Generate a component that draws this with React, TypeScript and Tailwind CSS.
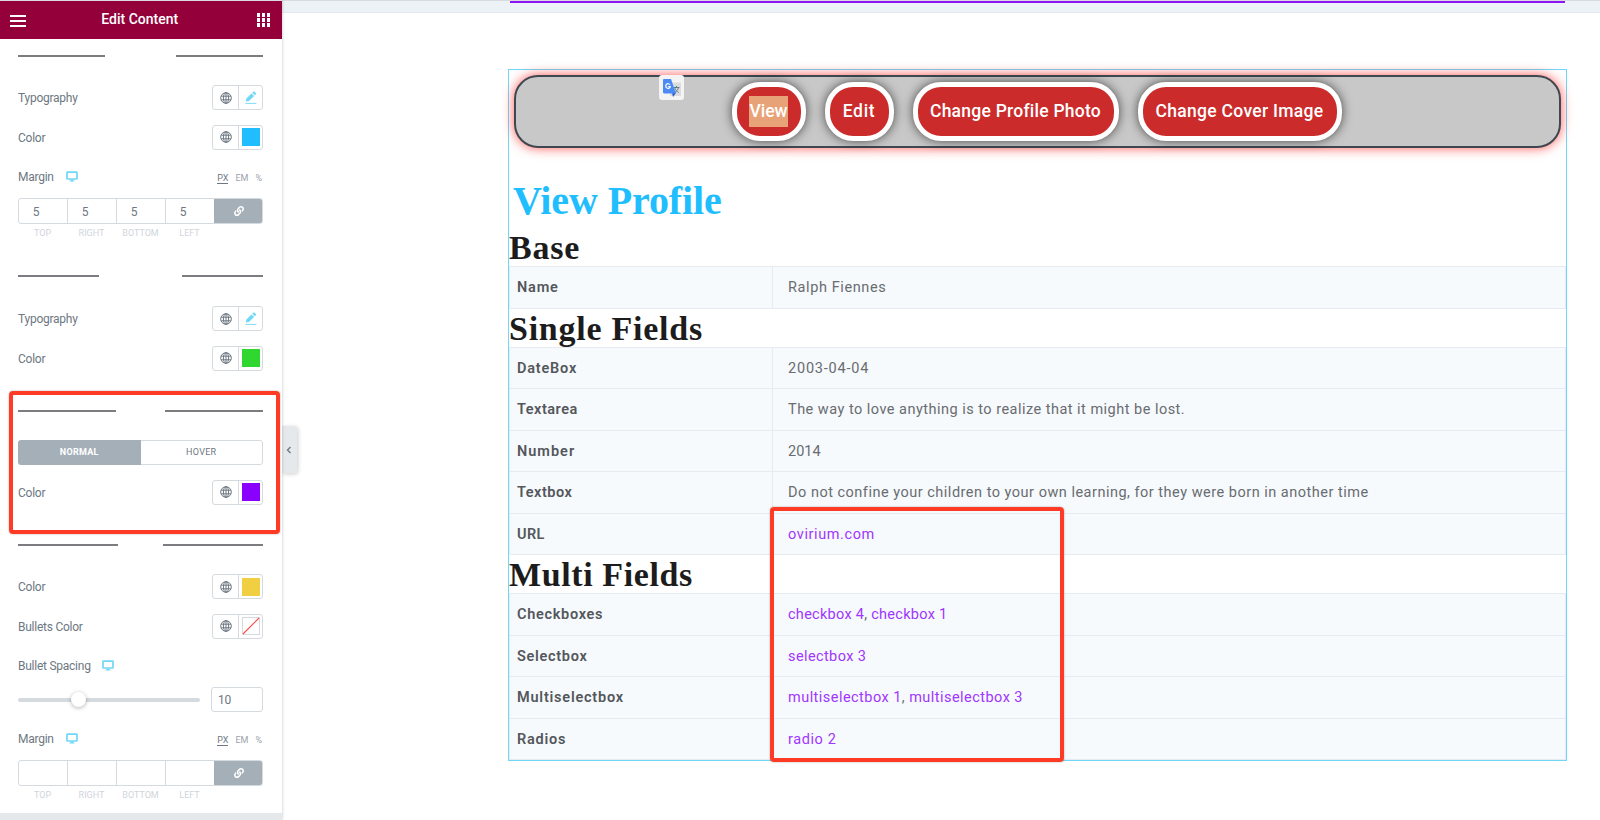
import { ReactNode } from 'react';
import { FaLink } from 'react-icons/fa';

type FieldRow = {
  label: string;
  labelTracking: string;
  value?: string;
  links?: string[];
  tracking: string;
};

const baseRows: FieldRow[] = [
  { label: 'Name', labelTracking: 'tracking-[0.8px]', value: 'Ralph Fiennes', tracking: 'tracking-[0.6px]' },
];

const singleRows: FieldRow[] = [
  { label: 'DateBox', labelTracking: 'tracking-[0.8px]', value: '2003-04-04', tracking: 'tracking-[0.8px]' },
  { label: 'Textarea', labelTracking: 'tracking-[0.5px]', value: 'The way to love anything is to realize that it might be lost.', tracking: 'tracking-[0.48px]' },
  { label: 'Number', labelTracking: 'tracking-[1px]', value: '2014', tracking: 'tracking-[0px]' },
  { label: 'Textbox', labelTracking: 'tracking-[0.5px]', value: 'Do not confine your children to your own learning, for they were born in another time', tracking: 'tracking-[0.5px]' },
  { label: 'URL', labelTracking: 'tracking-[0.4px]', links: ['ovirium.com'], tracking: 'tracking-[0.6px]' },
];

const multiRows: FieldRow[] = [
  { label: 'Checkboxes', labelTracking: 'tracking-[0.7px]', links: ['checkbox 4', 'checkbox 1'], tracking: 'tracking-[0.28px]' },
  { label: 'Selectbox', labelTracking: 'tracking-[0.7px]', links: ['selectbox 3'], tracking: 'tracking-[0.4px]' },
  { label: 'Multiselectbox', labelTracking: 'tracking-[0.78px]', links: ['multiselectbox 1', 'multiselectbox 3'], tracking: 'tracking-[0.46px]' },
  { label: 'Radios', labelTracking: 'tracking-[0.75px]', links: ['radio 2'], tracking: 'tracking-[0.6px]' },
];

const buttons = [
  { text: 'View', className: 'w-[74px] tracking-[0px]', selected: true },
  { text: 'Edit', className: 'w-[69px] tracking-[0.7px]' },
  { text: 'Change Profile Photo', className: 'w-[206px] tracking-[0.24px]' },
  { text: 'Change Cover Image', className: 'w-[204px] tracking-[0.3px]' },
];

const Monitor = ({ className }: { className: string }) => (
  <svg viewBox="0 0 12 11" className={`w-3 h-[11px] ${className}`} fill="none">
    <rect x="1" y="1.2" width="10" height="6.8" rx="0.5" stroke="#71d7f7" strokeWidth="1.7" />
    <path d="M4.4 8.5h3.2v1.2h1v.8H3.4v-.8h1z" fill="#71d7f7" />
  </svg>
);

const Globe = () => (
  <svg viewBox="0 0 12 12" className="size-3" fill="none" stroke="#6d7882" strokeWidth="1">
    <circle cx="6" cy="6" r="5.3" />
    <ellipse cx="6" cy="6" rx="2.6" ry="5.3" />
    <path d="M6 .7v10.6M1.2 4.2h9.6M1.2 7.8h9.6" />
  </svg>
);

const Pencil = () => (
  <svg viewBox="0 0 12 13" className="w-3 h-[13px]" fill="#71d7f7">
    <path d="M.8 10.600l.6-3.100 5.100-5.100 2.600 2.600-5.100 5.100zM7.200 1.700l1-1c.4-.4 1-.4 1.400 0l1.200 1.200c.4.4.4 1 0 1.400l-1 1z" />
    <path d="M.4 11.900h11v.9H.4z" />
  </svg>
);

const Control = ({ children }: { children: ReactNode }) => (
  <div className="flex w-[51px] h-[25px] border border-[#d5dadf] rounded-[3px]">
    <div className="w-[26px] flex items-center justify-center border-r border-[#d5dadf]">
      <Globe />
    </div>
    <div className="flex-1 flex items-center justify-center">{children}</div>
  </div>
);

const Row = ({ label, className, children }: { label: string; className: string; children: ReactNode }) => (
  <div className={`flex items-center justify-between h-[25px] ${className}`}>
    <span className="pt-px">{label}</span>
    <Control>{children}</Control>
  </div>
);

const Rule = ({ width, className }: { width: string; className: string }) => (
  <div className={`flex justify-between h-[2px] ${className}`}>
    <div className={`${width} bg-[#7b7b80]`} />
    <div className={`${width} bg-[#7b7b80]`} />
  </div>
);

const Dimensions = ({ values, className }: { values: string[]; className: string }) => (
  <div className={className}>
    <div className="flex items-center h-4">
      <span className="pt-px">Margin</span>
      <Monitor className="ml-3" />
      <div className="ml-auto mr-px mt-[4px] flex gap-[7px] text-[9px] leading-[10px] tracking-normal text-[#9aa3ab]">
        <span className="border-b border-[#6d7882] text-[#6d7882]">PX</span>
        <span>EM</span>
        <span>%</span>
      </div>
    </div>
    <div className="mt-[14px] flex h-[26px] border border-[#d5dadf] rounded-[3px] overflow-hidden">
      {values.map((v, i) => (
        <div key={i} className="w-[49px] pr-[14px] pt-px flex items-center justify-center border-r border-[#d5dadf]">
          {v}
        </div>
      ))}
      <div className="flex-1 -m-px flex items-center justify-center bg-[#a4afb7] text-white">
        <FaLink className="size-[10px]" />
      </div>
    </div>
    <div className="mt-[4px] flex text-[9px] leading-[10px] tracking-normal text-[#d0d5da] text-center">
      <span className="w-[49px]">TOP</span>
      <span className="w-[49px]">RIGHT</span>
      <span className="w-[49px]">BOTTOM</span>
      <span className="w-[49px]">LEFT</span>
    </div>
  </div>
);

const Section = ({ title, rows, tracking }: { title: string; rows: FieldRow[]; tracking: string }) => (
  <div>
    <h2 className={`h-[38px] pt-[1px] font-['Liberation_Serif',serif] font-bold text-[34px] leading-[37px] text-[#1c1c1c] whitespace-nowrap ${tracking}`}>
      {title}
    </h2>
    <div className="border-t border-x border-[#e6ebf2] bg-[#f6fafd]">
      {rows.map((row) => (
        <div key={row.label} className="flex items-center h-[41.5px] border-b border-[#e6ebf2] text-[14.5px] text-[#696c70] whitespace-nowrap">
          <div className={`w-[263px] h-full flex items-center pl-[7px] pt-[2px] border-r border-[#e6ebf2] font-semibold text-[#54575b] ${row.labelTracking}`}>
            {row.label}
          </div>
          <div className={`pl-[15px] pt-[2px] ${row.tracking}`}>
            {row.value}
            {row.links?.map((link, i) => (
              <span key={link}>
                {i > 0 && ', '}
                <a className="text-[#a035ff]">{link}</a>
              </span>
            ))}
          </div>
        </div>
      ))}
    </div>
  </div>
);

export default function App() {
  return (
    <div className="relative flex w-[1600px] h-[820px] overflow-hidden bg-white">
      {/* PANEL */}
      <aside className="relative z-10 w-[282px] shrink-0 bg-white font-['Roboto',sans-serif] text-[12px] tracking-[-0.25px] text-[#6d7882] shadow-[0_0_3px_rgba(0,0,0,0.25)]">
        <div className="h-px bg-[#d9dbde]" />
        <header className="flex items-center justify-between h-[37.5px] pl-[10px] pr-3 bg-[#93003a] text-white">
          <div className="flex flex-col gap-[3px] pt-[2px]">
            <div className="w-4 h-[2px] bg-white" />
            <div className="w-4 h-[2px] bg-white" />
            <div className="w-4 h-[2px] bg-white" />
          </div>
          <span className="pr-[3px] pb-px font-medium text-[14px] tracking-normal">Edit Content</span>
          <div className="grid grid-cols-3 gap-[1.5px]">
            {Array.from({ length: 9 }, (_, i) => (
              <div key={i} className="size-[3.5px] bg-white" />
            ))}
          </div>
        </header>

        <div className="pl-[18px] pr-[19px]">
          <Rule width="w-[87px]" className="mt-[16.5px]" />
          <Row label="Typography" className="mt-7"><Pencil /></Row>
          <Row label="Color" className="mt-[14.5px]">
            <div className="size-[18px] bg-[#20beff]" />
          </Row>
          <Dimensions values={['5', '5', '5', '5']} className="mt-[18.5px]" />

          <Rule width="w-[81px]" className="mt-[37px]" />
          <Row label="Typography" className="mt-[29px]"><Pencil /></Row>
          <Row label="Color" className="mt-[14.5px]">
            <div className="size-[18px] bg-[#30d730]" />
          </Row>

          <Rule width="w-[98px]" className="mt-[39px]" />
          <div className="mt-[28.5px] flex h-[25px] rounded-[3px] overflow-hidden text-[9px] tracking-[0.3px]">
            <div className="w-[122.5px] flex items-center justify-center bg-[#a4afb7] text-white font-bold">NORMAL</div>
            <div className="flex-1 flex items-center justify-center border border-l-0 border-[#d5dadf] rounded-r-[3px]">HOVER</div>
          </div>
          <Row label="Color" className="mt-[14.5px]">
            <div className="size-[18px] bg-[#8a00ff]" />
          </Row>

          <Rule width="w-[100px]" className="mt-[39px]" />
          <Row label="Color" className="mt-[28.5px]">
            <div className="size-[18px] bg-[#f1cf43]" />
          </Row>
          <Row label="Bullets Color" className="mt-[14.5px]">
            <svg viewBox="0 0 18 18" className="size-[18px]">
              <rect x="0.5" y="0.5" width="17" height="17" fill="#fff" stroke="#d5dadf" />
              <path d="M1 17L17 1" stroke="#ff4c4c" strokeWidth="1.2" />
            </svg>
          </Row>
          <div className="mt-[18.5px] flex items-center h-4">
            <span className="pt-px">Bullet Spacing</span>
            <Monitor className="ml-[11px]" />
          </div>
          <div className="mt-[14px] flex items-center justify-between h-[25px]">
            <div className="flex items-center w-[182px] h-[4px] rounded-full bg-[#d5dadf]">
              <div className="ml-[53px] size-[15px] rounded-full bg-white shadow-[0_1px_4px_rgba(0,0,0,0.3)]" />
            </div>
            <div className="w-[52px] h-[25px] pl-[6px] flex items-center border border-[#d5dadf] rounded-[3px]">10</div>
          </div>
          <Dimensions values={['', '', '', '']} className="mt-[18px]" />
        </div>
        <div className="mt-[13px] h-[8px] bg-[#e6e9ec]" />
      </aside>

      {/* PREVIEW */}
      <main className="flex-1 font-['Roboto',sans-serif]">
        <div className="h-[13px] border-t border-[#d9dbde] border-b border-b-[#e2e8ee] bg-[#edf2f6]">
          <div className="ml-[228px] w-[1055px] h-[2px] bg-[#8c15f5]" />
        </div>
        <div className="mt-[56px] ml-[226px] w-[1059px] h-[692px] border border-[#71d7f7]">
          <nav className="mt-[5px] mx-[5px] h-[73px] pr-[2px] flex items-center justify-center gap-[19px] rounded-[24px] border-[2px] border-[#3f4850] bg-[#c8c8c8] shadow-[0_0_12px_rgba(255,0,0,0.65)]">
            {buttons.map((b) => (
              <button key={b.text} className={`h-[59px] shrink-0 rounded-[28px] border-[5px] border-white bg-[#cb2b2b] text-white font-medium text-[17.5px] whitespace-nowrap shadow-[0_0_11px_rgba(0,0,0,0.65)] ${b.className}`}>
                <span className={b.selected ? 'inline-block h-[31px] leading-[31px] bg-[#e8a277]' : ''}>{b.text}</span>
              </button>
            ))}
          </nav>
          <h1 className="mt-[30px] ml-[4px] h-[50px] font-['Liberation_Serif',serif] font-bold text-[40px] leading-[46px] tracking-[-0.1px] text-[#20beff]">View Profile</h1>
          <Section title="Base" rows={baseRows} tracking="tracking-[0.8px]" />
          <Section title="Single Fields" rows={singleRows} tracking="tracking-[0.75px]" />
          <Section title="Multi Fields" rows={multiRows} tracking="tracking-[0.6px]" />
        </div>
      </main>

      {/* COLLAPSE HANDLE */}
      <div className="absolute left-[282px] top-[426px] w-[15px] h-[47px] pr-[2px] flex items-center justify-center rounded-r-[3px] bg-[#e6e9ec] shadow-[1px_1px_4px_rgba(0,0,0,0.2)]">
        <svg viewBox="0 0 6 8" className="w-[6px] h-[8px]" fill="none">
          <path d="M4.5 1L1.5 4l3 3" stroke="#6d7882" strokeWidth="1.4" />
        </svg>
      </div>

      {/* TRANSLATE BADGE */}
      <div className="absolute left-[659px] top-[75px] size-[25px] flex items-center justify-center rounded-[3px] bg-[#f4f4f4]">
        <svg viewBox="0 0 18 18" className="size-[18px]">
          <rect x="7" y="3.5" width="11" height="13.5" rx="1" fill="#dcdcdc" />
          <path d="M10.5 8.500h6M13.500 7v1.500M15.500 8.500c-.5 2.500-2 4-4 5M11.800 8.800c.5 2 2 3.700 3.800 4.700" stroke="#5f7f8c" strokeWidth="1" fill="none" />
          <path d="M9 13.500h4.200L10 18z" fill="#2a56c6" />
          <path d="M1.200 0H8l5 14.500H1.200C.5 14.500 0 14 0 13.300V1.200C0 .5.500 0 1.200 0z" fill="#4c8bf5" />
          <path d="M7 5.800a2.300 2.300 0 1 0 .3 1.700H5.200" stroke="#fff" strokeWidth="1.2" fill="none" />
        </svg>
      </div>

      {/* HIGHLIGHTS */}
      <div className="absolute z-20 left-[8.5px] top-[391px] w-[271.5px] h-[143px] rounded-[4px] border-[4px] border-[#ff3b26] shadow-[0_0_2px_rgba(0,0,0,0.35)]" />
      <div className="absolute z-20 left-[770px] top-[507px] w-[294px] h-[255px] rounded-[4px] border-[4px] border-[#ff3b26] shadow-[0_0_2px_rgba(0,0,0,0.35)]" />
    </div>
  );
}
